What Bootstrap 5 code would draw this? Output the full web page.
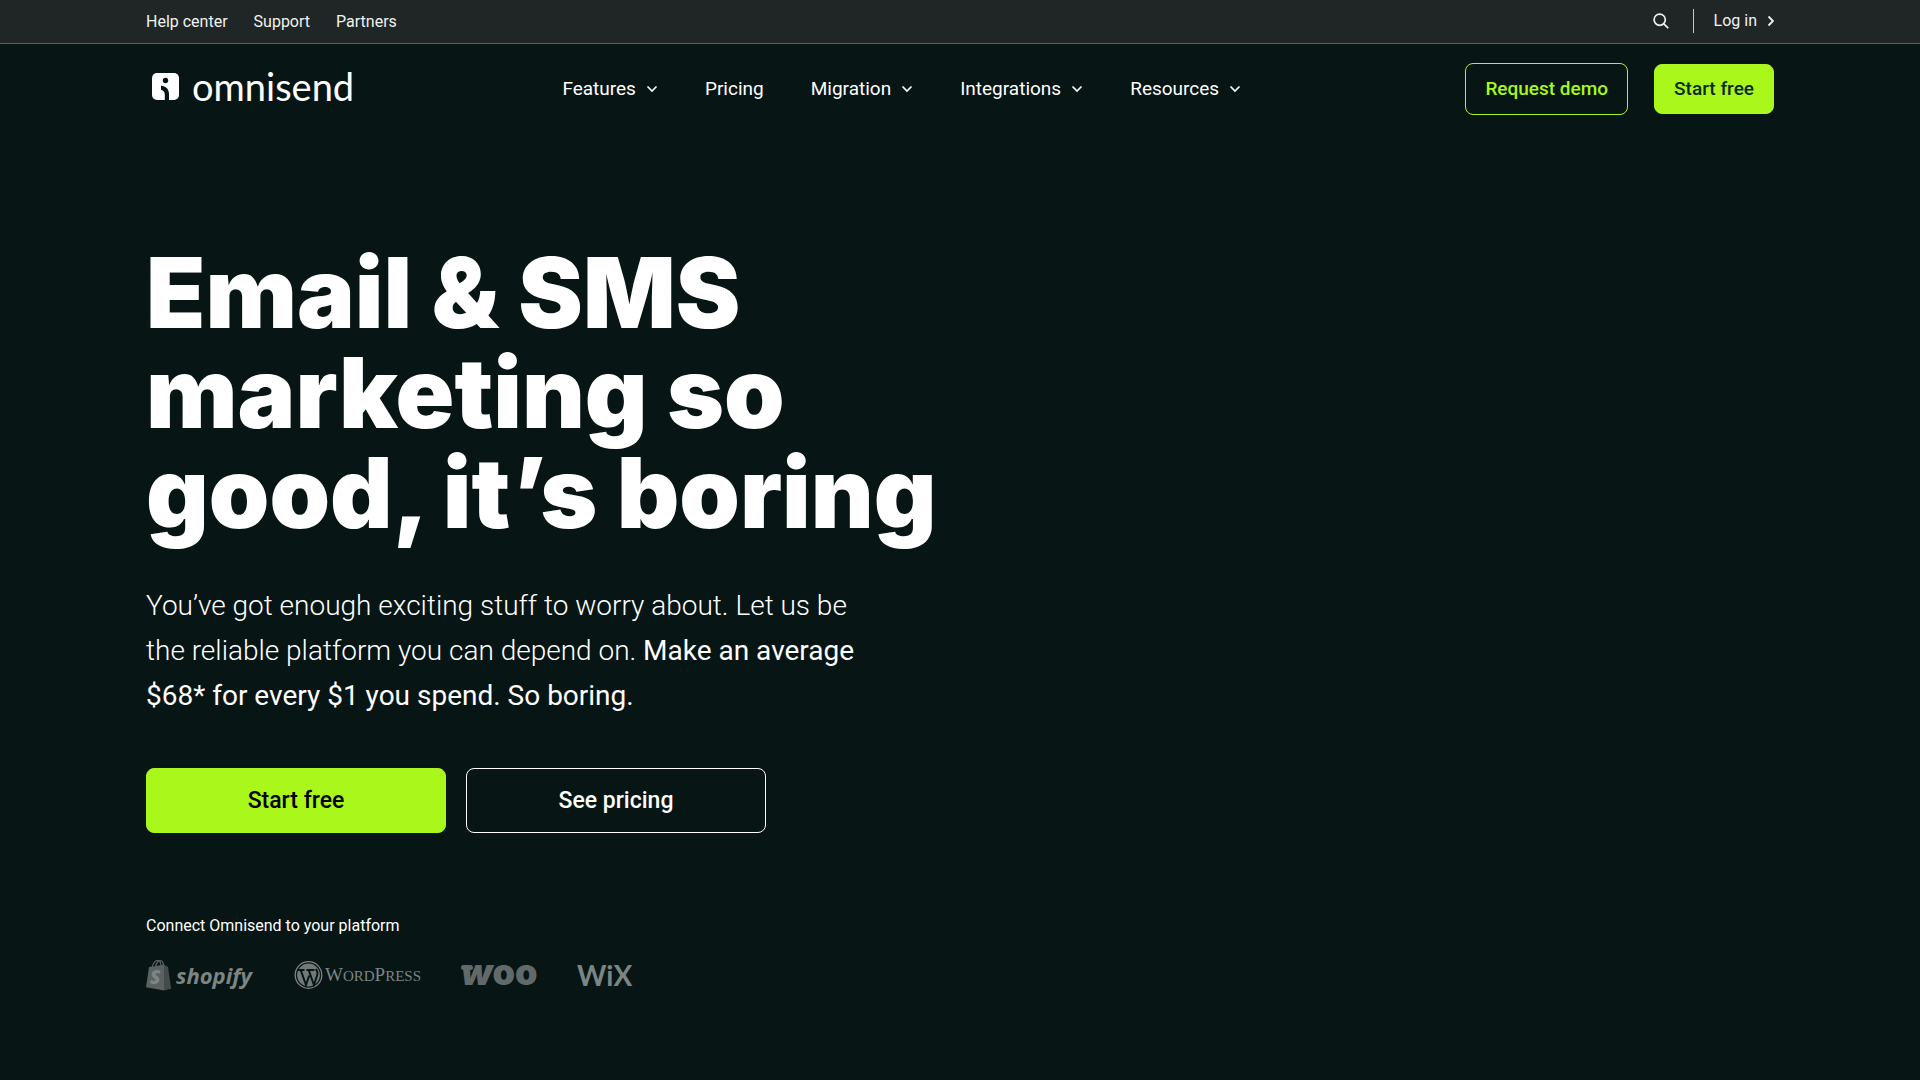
<!DOCTYPE html>
<html lang="en">
<head>
<meta charset="utf-8">
<meta name="viewport" content="width=device-width, initial-scale=1">
<title>Omnisend</title>
<link href="https://cdn.jsdelivr.net/npm/bootstrap@5.3.0/dist/css/bootstrap.min.css" rel="stylesheet">
<style>
  :root { --ink: #071514; --bar: #1f2625; --lime: #a9f71b; }
  body { background: var(--ink); color: #fff; font-family: Roboto, "Liberation Sans", sans-serif; font-size: 16px; line-height: 24px; }
  a { color: #fff; text-decoration: none; }
  .wrap { max-width: 1676px; padding: 0 24px; }
  .topbar { background: var(--bar); border-bottom: 1px solid #586060; }
  .topbar .wrap { height: 43px; }
  .topbar a, .topbar button { color: #f0f2f1; }
  .util-nav { gap: 26px; }
  .util-actions { padding-bottom: 2px; }
  .login { gap: 9px; }
  .rule { width: 1px; height: 24px; background: #c4c8c7; margin: 0 20px 0 24px; }
  .brand-row { height: 89px; }
  .brand { margin-left: 6px; gap: 12px; padding-bottom: 4px; }
  .brand-word { font-family: Lato, sans-serif; font-size: 38px; line-height: 40px; padding-bottom: 2px; }
  .main-nav { gap: 47px; }
  .main-nav a { font-size: 19px; gap: 10px; }
  .btn { --bs-btn-border-radius: 8px; font-weight: 500; font-size: 19px; line-height: 24px; }
  .btn-lime { --bs-btn-bg: var(--lime); --bs-btn-color: #0c2a1c; --bs-btn-border-color: var(--lime); --bs-btn-hover-bg: #bcff4a; }
  .btn-line { --bs-btn-color: var(--lime); --bs-btn-border-color: var(--lime); --bs-btn-hover-color: #fff; --bs-btn-hover-border-color: #fff; }
  .btn-ghost { --bs-btn-color: #fff; --bs-btn-border-color: #fff; --bs-btn-hover-color: var(--lime); --bs-btn-hover-border-color: var(--lime); }
  .brand-row .btn { padding: 12px 19px; }
  .brand-row .btn-line { padding: 13px 19px; }
  .header-actions { gap: 26px; }
  .hero { padding-top: 110px; max-width: 824px; }
  .hero h1 { font-family: Inter, sans-serif; font-weight: 900; font-size: 97px; line-height: 100px; margin-bottom: 40px; }
  .pitch { font-size: 28px; line-height: 45px; font-weight: 300; max-width: 720px; margin-bottom: 50px; }
  .pitch strong { font-weight: 400; }
  .hero-actions { gap: 20px; }
  .hero .btn { width: 300px; height: 65px; font-size: 23px; }
  .hero .btn-lime { --bs-btn-color: #000; }
  .platforms { margin-top: 81px; }
  .logos { gap: 40px; margin-top: 21px; height: 32px; color: #7d8584; }
  .logos svg { overflow: visible; }
  .logos svg text { fill: currentColor; }
  .logos .woo-mark { color: #626a69; }
</style>
</head>
<body>
<div class="topbar">
  <div class="wrap container-fluid d-flex align-items-center justify-content-between">
    <nav class="util-nav d-flex" aria-label="Utility">
      <a href="#">Help center</a><a href="#">Support</a><a href="#">Partners</a>
    </nav>
    <div class="util-actions d-flex align-items-center">
      <button class="border-0 bg-transparent p-0 d-flex" type="button" aria-label="Search">
        <svg width="16" height="16" viewBox="0 0 16 16" fill="none" stroke="currentColor" stroke-width="1.700"><circle cx="6.700" cy="6.700" r="5.600"/><path d="M10.800 10.800l4.400 4.400"/></svg>
      </button>
      <span class="rule"></span>
      <a href="#" class="login d-flex align-items-center">Log in
        <svg width="8" height="12" viewBox="0 0 8 12" fill="none" stroke="currentColor" stroke-width="1.800"><path d="M2.500 1.500L7 6l-4.500 4.500"/></svg>
      </a>
    </div>
  </div>
</div>
<header class="wrap container-fluid brand-row d-flex align-items-center justify-content-between">
  <a href="#" class="brand d-flex align-items-center" aria-label="Omnisend">
    <svg width="28" height="28" viewBox="0 0 28 28"><rect width="27" height="27" rx="5" fill="#fff"/><g fill="#071514"><circle cx="13.500" cy="7.500" r="2.700"/><path d="M9 12.700c4.800.2 8 3.300 8 8.300v6h-4.200v-4.800c0-2.200-.3-4.200-3.800-5.400z"/></g></svg>
    <span class="brand-word">omnisend</span>
  </a>
  <nav class="main-nav d-flex me-3" aria-label="Main">
    <a href="#" class="d-flex align-items-center">Features <svg width="12" height="8" viewBox="0 0 12 8" fill="none" stroke="currentColor" stroke-width="1.700"><path d="M1.500 1.500L6 6l4.500-4.500"/></svg></a>
    <a href="#">Pricing</a>
    <a href="#" class="d-flex align-items-center">Migration <svg width="12" height="8" viewBox="0 0 12 8" fill="none" stroke="currentColor" stroke-width="1.700"><path d="M1.500 1.500L6 6l4.500-4.500"/></svg></a>
    <a href="#" class="d-flex align-items-center">Integrations <svg width="12" height="8" viewBox="0 0 12 8" fill="none" stroke="currentColor" stroke-width="1.700"><path d="M1.500 1.500L6 6l4.500-4.500"/></svg></a>
    <a href="#" class="d-flex align-items-center">Resources <svg width="12" height="8" viewBox="0 0 12 8" fill="none" stroke="currentColor" stroke-width="1.700"><path d="M1.500 1.500L6 6l4.500-4.500"/></svg></a>
  </nav>
  <div class="header-actions d-flex align-items-center">
    <button type="button" class="btn btn-line">Request demo</button>
    <button type="button" class="btn btn-lime">Start free</button>
  </div>
</header>
<main class="wrap container-fluid">
  <section class="hero">
    <h1>Email &amp; SMS<br>marketing so<br>good, it’s boring</h1>
    <p class="pitch">You’ve got enough exciting stuff to worry about. Let us be the reliable platform you can depend on. <strong>Make an average $68* for every $1 you spend. So boring.</strong></p>
    <div class="hero-actions d-flex">
      <button type="button" class="btn btn-lime">Start free</button>
      <button type="button" class="btn btn-ghost">See pricing</button>
    </div>
    <div class="platforms">
      <div>Connect Omnisend to your platform</div>
      <div class="logos d-flex align-items-center">
        <svg width="108" height="32" viewBox="0 0 108 32" role="img" aria-label="Shopify">
          <path d="M3 8l15-2.200L18 31.500 0 28.300z" fill="#596261"/><path d="M18 5.800l4 2.200 3.200 21.700-7.200 1.800z" fill="#434c4b"/>
          <path d="M6 9C7 3.500 10 .8 12.200 1.500 14.800 2.300 15 6 15 8M9.500 8.500C10 3.500 13 .5 15.500 2c1.700 1 2 3 2.200 5" fill="none" stroke="#596261" stroke-width="1.300"/>
          <text x="4" y="25" font-family="Open Sans" font-weight="800" font-style="italic" font-size="19">S</text>
          <text x="30" y="25" font-family="Open Sans" font-weight="700" font-style="italic" font-size="22">shopify</text>
        </svg>
        <svg width="127" height="32" viewBox="0 0 127 32" role="img" aria-label="WordPress">
          <circle cx="14.500" cy="16" r="13.300" fill="none" stroke="#7d8584" stroke-width="1.300"/>
          <circle cx="14.500" cy="16" r="11.400" fill="#727a79"/>
          <path d="M3.500 11h7M12.500 11h8M6.700 11l5.300 15 3.200-9.500M14.700 11l5.200 15 3.500-10.500c.8-2.500-.5-3.700-1.500-5.500" fill="none" stroke="#071514" stroke-width="2"/>
          <text x="31" y="22" font-family="Liberation Serif" font-size="19">W<tspan font-size="15">ORD</tspan>P<tspan font-size="15">RESS</tspan></text>
        </svg>
        <svg class="woo-mark" width="76" height="32" viewBox="0 0 76 32" role="img" aria-label="Woo">
          <path d="M2.500 8.500h7" stroke="currentColor" stroke-width="5" stroke-linecap="round"/>
          <text x="0" y="26" font-family="Inter" font-weight="900" font-size="36"><tspan font-style="italic">w</tspan>oo</text>
        </svg>
        <svg width="56" height="32" viewBox="0 0 56 32" role="img" aria-label="Wix">
          <text x="0" y="27" font-family="Lato" font-weight="700" font-size="28">WiX</text>
        </svg>
      </div>
    </div>
  </section>
</main>
<script src="https://cdn.jsdelivr.net/npm/bootstrap@5.3.0/dist/js/bootstrap.bundle.min.js"></script>
</body>
</html>
